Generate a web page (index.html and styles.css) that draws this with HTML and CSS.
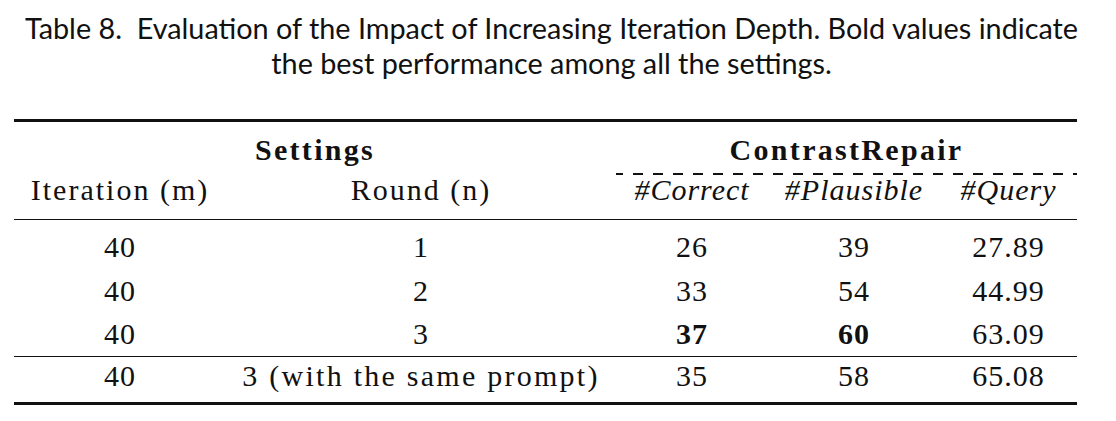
FILE: index.html
```html
<!DOCTYPE html>
<html>
<head>
<meta charset="utf-8">
<link rel="stylesheet" href="styles.css">
</head>
<body>
<div class="page">
  <p class="caption">Table 8.&nbsp; Evaluation of the Impact of Increasing Iteration Depth. Bold values indicate<br>the best performance among all the settings.</p>
  <table class="results">
    <colgroup>
      <col class="c1"><col class="c2"><col class="c3"><col class="c4"><col class="c5">
    </colgroup>
    <thead>
      <tr class="group-row">
        <th colspan="2">Settings</th>
        <th colspan="3" class="dashed">ContrastRepair</th>
      </tr>
      <tr class="sub-row">
        <th class="wide">Iteration (m)</th>
        <th class="wide">Round (n)</th>
        <th class="it">#Correct</th>
        <th class="it">#Plausible</th>
        <th class="it">#Query</th>
      </tr>
    </thead>
    <tbody>
      <tr class="first">
        <td>40</td><td>1</td><td>26</td><td>39</td><td>27.89</td>
      </tr>
      <tr>
        <td>40</td><td>2</td><td>33</td><td>54</td><td>44.99</td>
      </tr>
      <tr>
        <td>40</td><td>3</td><td class="b">37</td><td class="b">60</td><td>63.09</td>
      </tr>
      <tr class="last">
        <td>40</td><td class="wide">3 (with the same prompt)</td><td>35</td><td>58</td><td>65.08</td>
      </tr>
    </tbody>
  </table>
</div>
</body>
</html>
```
FILE: styles.css
```css
html, body {
  margin: 0;
  padding: 0;
  background: #fff;
}

.page {
  padding-left: 14px;
  width: 1075px;
  color: #111;
}

.caption {
  margin: 0;
  padding-top: 11px;
  font-family: "Lato", "Noto Sans", sans-serif;
  font-size: 28.8px;
  line-height: 35px;
  text-align: center;
}

.results {
  margin-top: 38px;
  width: 1063px;
  table-layout: fixed;
  border-collapse: collapse;
  font-family: "Liberation Serif", "Times New Roman", serif;
  font-size: 30px;
  letter-spacing: 1px;
  border-top: 3px solid #111;
  border-bottom: 3px solid #111;
}

.c1 { width: 212px; }
.c2 { width: 390px; }
.c3 { width: 152px; }
.c4 { width: 172px; }
.c5 { width: 137px; }

.results th,
.results td {
  padding: 0;
  text-align: center;
  vertical-align: baseline;
  white-space: nowrap;
}

.group-row th {
  font-weight: bold;
  line-height: 36px;
  padding-top: 10px;
  padding-bottom: 6.5px;
  letter-spacing: 2.3px;
}

.group-row th.dashed {
  background-image: linear-gradient(90deg, #111 10px, transparent 10px);
  background-size: 20px 1.5px;
  background-repeat: repeat-x;
  background-position: 17px 100%;
}

.sub-row th {
  font-weight: normal;
  line-height: 30px;
  padding-top: 0;
  padding-bottom: 14.5px;
  border-bottom: 1.5px solid #111;
}

.sub-row th.it {
  font-style: italic;
}

.results .wide {
  letter-spacing: 2px;
}

.results td.wide {
  letter-spacing: 2.25px;
}

.results td {
  line-height: 28px;
  padding-top: 7.75px;
  padding-bottom: 7.75px;
}

.results tr.first td {
  padding-top: 13.35px;
}

.results tr.last td {
  border-top: 1.5px solid #111;
  padding-top: 4.75px;
  padding-bottom: 12px;
}

.results td.b {
  font-weight: bold;
}
```
